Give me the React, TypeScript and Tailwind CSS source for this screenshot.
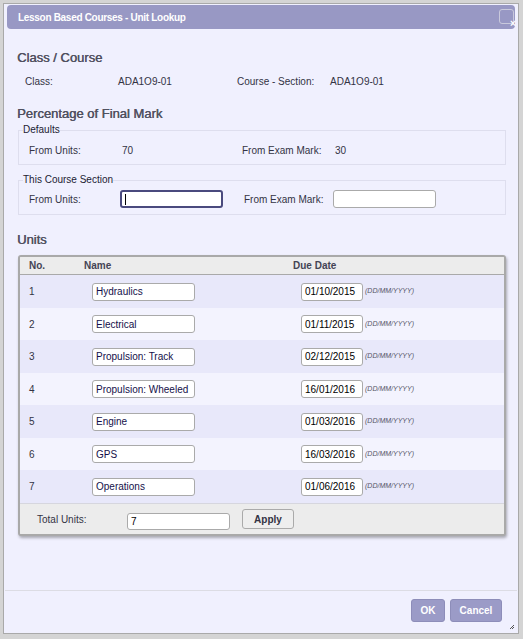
import React from "react";

const units = [
  { no: 1, name: "Hydraulics", date: "01/10/2015" },
  { no: 2, name: "Electrical", date: "01/11/2015" },
  { no: 3, name: "Propulsion: Track", date: "02/12/2015" },
  { no: 4, name: "Propulsion: Wheeled", date: "16/01/2016" },
  { no: 5, name: "Engine", date: "01/03/2016" },
  { no: 6, name: "GPS", date: "16/03/2016" },
  { no: 7, name: "Operations", date: "01/06/2016" },
];

export default function App() {
  return (
    <div
      className="w-[523px] h-[639px] bg-[#d4d4d4] pt-[3px] pl-[3px] overflow-hidden"
      style={{ fontFamily: '"Liberation Sans", Arial, sans-serif' }}
    >
      <div className="relative w-[516px] h-[631px] bg-[#f0f0fe] border border-[#a9a9a9] flex flex-col">
        {/* Title bar */}
        <div className="mx-[3px] mt-[1px] h-[24px] rounded-[4px] bg-[#9898c4] flex items-center pl-[11px] text-white font-bold text-[10px] tracking-[-0.3px]">
          Lesson Based Courses - Unit Lookup
        </div>
        <div className="absolute left-[495px] top-[5px] w-[15px] h-[15px] rounded-[3px] border border-[#c9c9dc]" />
        <div className="absolute left-[506px] top-[15px] text-white font-bold text-[10px] leading-[10px]">×</div>

        {/* Content */}
        <div className="flex-1 pl-[13px] pr-[11px] flex flex-col">
          <div className="mt-[21px] h-[16px] leading-[16px] text-[13px] text-[#505060] [text-shadow:0.4px_0_0_#505060]">Class / Course</div>
          <div className="mt-[9px] h-[14px] leading-[14px] text-[10px] text-[#333344] grid grid-cols-[93px_119px_93px_1fr] pl-[8px]">
            <span>Class:</span>
            <span>ADA1O9-01</span>
            <span>Course - Section:</span>
            <span>ADA1O9-01</span>
          </div>

          <div className="mt-[17px] h-[16px] leading-[16px] text-[13px] text-[#505060] [text-shadow:0.4px_0_0_#505060]">Percentage of Final Mark</div>

          <fieldset className="mt-[2px] ml-[1px] w-[488px] border border-[#dedeee] px-[4px] pb-[3px]">
            <legend className="text-[10px] leading-[12px] text-[#222233]">Defaults</legend>
            <div className="h-[20px] leading-[20px] text-[10px] text-[#333344] grid grid-cols-[93px_120px_93px_1fr] pl-[6px] mt-[5px]">
              <span>From Units:</span>
              <span>70</span>
              <span>From Exam Mark:</span>
              <span>30</span>
            </div>
          </fieldset>

          <fieldset className="mt-[9px] ml-[1px] w-[488px] border border-[#dedeee] px-[4px] pb-[6px]">
            <legend className="text-[10px] leading-[12px] text-[#222233]">This Course Section</legend>
            <div className="h-[18px] text-[10px] text-[#333344] grid grid-cols-[91px_122px_91px_1fr] items-center pl-[6px] mt-[4px]">
              <span>From Units:</span>
              <div className="w-[103px] h-[18px] rounded-[3px] border-2 border-[#4a4a7e] bg-white flex items-center pl-[3px]">
                <div className="w-[1px] h-[11px] bg-black" />
              </div>
              <span className="pl-[2px]">From Exam Mark:</span>
              <div className="w-[103px] h-[18px] rounded-[3px] border border-[#aaaaaa] bg-white" />
            </div>
          </fieldset>

          <div className="mt-[17px] h-[16px] leading-[16px] text-[13px] text-[#505060] [text-shadow:0.4px_0_0_#505060]">Units</div>

          {/* Units table */}
          <div className="mt-[7px] ml-[1px] w-[488px] rounded-[3px] border-2 border-[#a9a9a9] bg-[#ececec] shadow-[1px_2px_3px_rgba(0,0,0,0.3)] overflow-hidden">
            <div className="h-[18px] border-b border-[#a9a9a9] bg-[#ececec] flex items-center text-[10px] font-bold text-[#444455]">
              <span className="pl-[9px] w-[64px]">No.</span>
              <span className="w-[209px]">Name</span>
              <span>Due Date</span>
            </div>
            {units.map((u, i) => (
              <div
                key={u.no}
                className={`${i % 2 === 0 ? "h-[33px] bg-[#e8e8fa]" : "h-[32px] bg-[#f3f3fe]"} flex items-center text-[10px] text-[#333344]`}
              >
                <span className="pl-[9px] w-[72px]">{u.no}</span>
                <div className="w-[103px] h-[18px] rounded-[3px] border border-[#aaaaaa] bg-white flex items-center pl-[3px] text-[10px] text-[#14104a]">
                  {u.name}
                </div>
                <div className="ml-[106px] w-[62px] h-[18px] rounded-[3px] border border-[#aaaaaa] bg-white flex items-center pl-[3px] text-[10px] text-black">
                  {u.date}
                </div>
                <span className="ml-[2px] text-[7px] italic text-[#555566]">(DD/MM/YYYY)</span>
              </div>
            ))}
            <div className="h-[31px] border-t border-[#d6d6de] bg-[#ececec] flex items-center text-[10px] text-[#333344]">
              <span className="pl-[17px] w-[107px]">Total Units:</span>
              <div className="w-[103px] h-[17px] mt-[5px] rounded-[3px] border border-[#aaaaaa] bg-white flex items-center pl-[3px] text-[10px] text-black">
                7
              </div>
              <button className="ml-[12px] w-[52px] h-[20px] rounded-[3px] border border-[#aaaaaa] bg-[#eeeeee] text-[10px] font-bold text-[#333344]">
                Apply
              </button>
            </div>
          </div>
        </div>

        {/* Button pane */}
        <div className="h-[42px] mb-[1px] border-t border-[#dcdce4] mx-[1px] flex justify-end items-start pt-[8px] pr-[15px] gap-[5px]">
          <button className="w-[34px] h-[23px] rounded-[3px] border border-[#8d8db9] bg-[#9b9bc7] text-white text-[10px] font-bold">
            OK
          </button>
          <button className="w-[52px] h-[23px] rounded-[3px] border border-[#8d8db9] bg-[#9b9bc7] text-white text-[10px] font-bold">
            Cancel
          </button>
        </div>
        <svg className="absolute right-[3px] bottom-[3px]" width="6" height="6" viewBox="0 0 6 6">
          <path d="M5 1 L1 5 M5 3 L3 5" stroke="#555" strokeWidth="1" />
        </svg>
      </div>
    </div>
  );
}
